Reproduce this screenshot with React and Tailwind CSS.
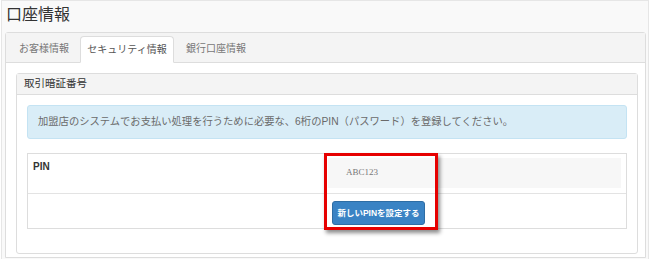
const font = "font-['Liberation_Sans','Noto_Sans_CJK_JP',sans-serif]";

function Tab({ label, active, width }) {
  if (active) {
    return (
      <div
        className={`${width} h-[27px] -mb-px flex items-center justify-center bg-white border border-[#dddddd] border-b-white rounded-t-[4px] text-[10px] text-[#555]`}
      >
        {label}
      </div>
    );
  }
  return (
    <div
      className={`${width} h-[27px] flex items-center justify-center text-[10px] text-[#777]`}
    >
      {label}
    </div>
  );
}

export default function App() {
  return (
    <div className={`w-[650px] h-[259px] overflow-hidden bg-white ${font}`}>
      <div className="ml-px w-[648px] h-[259px] bg-[#f9f9f9] border-t border-l border-r border-[#e6e6e6] pl-[3px] pr-[2px]">
        <h1 className="h-[31px] pl-px pt-[1px] text-[16px] leading-[26px] text-[#333]">
          口座情報
        </h1>

        <div className="h-[226px] bg-white border border-[#dddddd] rounded-t-[3px]">
          {/* tabs */}
          <div className="h-[30px] bg-[#f4f4f4] border-b border-[#dddddd] flex items-end gap-[2px] pl-[4px]">
            <Tab label="お客様情報" width="w-[68px]" />
            <Tab label="セキュリティ情報" width="w-[94px]" active />
            <Tab label="銀行口座情報" width="w-[80px]" />
          </div>

          <div className="pl-[10px] pr-[7px] pt-[10px]">
            <div className="h-[181px] border border-[#dddddd] rounded-[3px]">
              <div className="h-[21px] bg-[#f4f4f4] border-b border-[#dddddd] pl-[7px] flex items-center text-[10.5px] text-[#333]">
                取引暗証番号
              </div>

              <div className="px-[10px] pt-[10px]">
                <div className="h-[34px] bg-[#d9edf7] border border-[#c4e3f3] rounded-[3px] pl-[10px] flex items-center text-[10.3px] text-[#6a6a6a]">
                  加盟店のシステムでお支払い処理を行うために必要な、6桁のPIN（パスワード）を登録してください。
                </div>

                <div className="relative mt-[14px] border border-[#dddddd]">
                  <div className="grid grid-cols-[300px_1fr] h-[40px] border-b border-[#e3e3e3]">
                    <div className="pl-[5px] pt-[5px] text-[10px] font-bold text-[#333]">
                      PIN
                    </div>
                    <div className="pt-[4px] pr-[5px]">
                      <div className="h-[30px] bg-[#f7f7f7] pl-[18px] flex items-center font-['Liberation_Serif',serif] text-[9px] text-[#777]">
                        ABC123
                      </div>
                    </div>
                  </div>
                  <div className="grid grid-cols-[304px_1fr] h-[34px]">
                    <div />
                    <div className="pt-[5px]">
                      <button className="w-[93px] h-[24px] bg-[#3a83c4] border border-[#2e6da4] rounded-[3px] text-white text-[8.5px] font-bold">
                        新しいPINを設定する
                      </button>
                    </div>
                  </div>

                  <div className="absolute left-[296px] top-[-1px] w-[114px] h-[77px] border-[3px] border-[#e60000] shadow-[2px_3px_4px_rgba(0,0,0,0.45)]" />
                </div>
              </div>
            </div>
          </div>
        </div>
      </div>
    </div>
  );
}
